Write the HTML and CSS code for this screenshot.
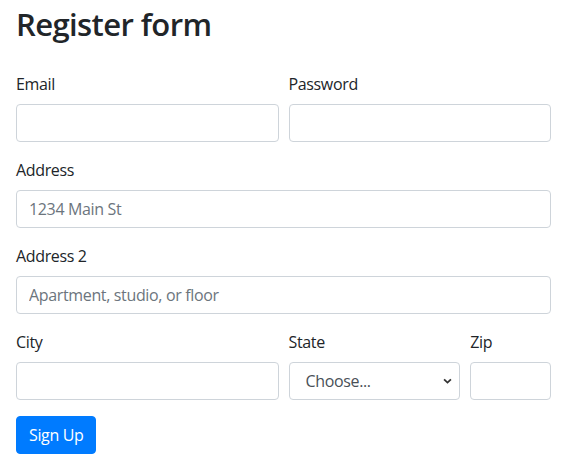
FILE: index.html
```html
<!DOCTYPE html>
<html lang="en">
<head>
<meta charset="utf-8">
<title>Register form</title>
<link rel="stylesheet" href="styles.css">
</head>
<body>
<div class="container">
  <h1 class="title">Register form</h1>
  <form class="form">
    <div class="row">
      <div class="group col-6">
        <label class="label" for="email">Email</label>
        <input class="control" type="email" id="email">
      </div>
      <div class="group col-6">
        <label class="label" for="password">Password</label>
        <input class="control" type="password" id="password">
      </div>
    </div>
    <div class="group">
      <label class="label" for="address">Address</label>
      <input class="control" type="text" id="address" placeholder="1234 Main St">
    </div>
    <div class="group">
      <label class="label" for="address2">Address 2</label>
      <input class="control" type="text" id="address2" placeholder="Apartment, studio, or floor">
    </div>
    <div class="row">
      <div class="group col-6">
        <label class="label" for="city">City</label>
        <input class="control" type="text" id="city">
      </div>
      <div class="group col-4">
        <label class="label" for="state">State</label>
        <select class="control select" id="state">
          <option selected>Choose...</option>
          <option>...</option>
        </select>
      </div>
      <div class="group col-2">
        <label class="label" for="zip">Zip</label>
        <input class="control" type="text" id="zip">
      </div>
    </div>
    <button class="btn" type="submit">Sign Up</button>
  </form>
</div>
</body>
</html>
```
FILE: styles.css
```css
* { box-sizing: border-box; }
body {
  margin: 0;
  font-family: "Open Sans", "Noto Sans", sans-serif;
  font-size: 16px;
  line-height: 24px;
  letter-spacing: -0.35px;
  color: #212529;
  background: #fff;
}
.container {
  padding: 5px 16px 0;
}
.title {
  margin: 0 0 29px;
  font-size: 31px;
  font-weight: 600;
  line-height: 38px;
  letter-spacing: -0.6px;
}
.row {
  display: flex;
  margin: 0 -5px;
}
.row > .group { padding: 0 5px; }
.col-6 { flex: 0 0 50%; }
.col-4 { flex: 0 0 33.3333%; }
.col-2 { flex: 0 0 16.6667%; }
.group { margin-bottom: 16px; }
.label {
  display: block;
  margin-bottom: 8px;
}
.control {
  display: block;
  width: 100%;
  height: 38px;
  padding: 6px 12px;
  font: inherit;
  letter-spacing: inherit;
  color: #495057;
  background: #fff;
  border: 1px solid #ced4da;
  border-radius: 4px;
  outline: none;
}
.control::placeholder { color: #6c757d; }
.select {
  appearance: none;
  -webkit-appearance: none;
  padding-left: 16px;
  background-image: url("data:image/svg+xml,%3Csvg xmlns='http://www.w3.org/2000/svg' width='10' height='6' viewBox='0 0 10 6'%3E%3Cpath d='M1.2 1.2l3.8 3.6 3.8-3.6' fill='none' stroke='%23333' stroke-width='2'/%3E%3C/svg%3E");
  background-repeat: no-repeat;
  background-position: right 7px center;
  background-size: 9px 6px;
}
.btn {
  display: inline-block;
  height: 38px;
  padding: 6px 12px;
  font: inherit;
  letter-spacing: inherit;
  color: #fff;
  background: #007bff;
  border: 1px solid #007bff;
  border-radius: 4px;
  cursor: pointer;
}
```
